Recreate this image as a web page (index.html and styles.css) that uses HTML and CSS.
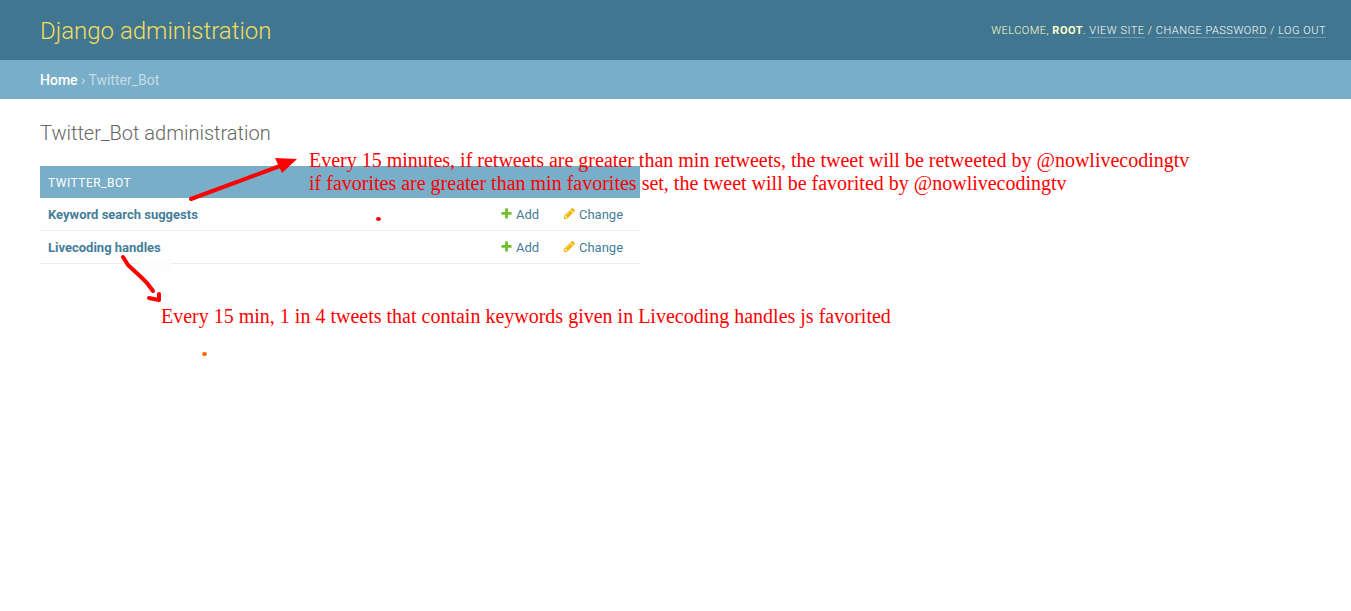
FILE: index.html
```html
<!DOCTYPE html>
<html lang="en">
<head>
<meta charset="utf-8">
<title>Twitter_Bot administration</title>
<link rel="stylesheet" href="styles.css">
</head>
<body>
<svg class="symbols" aria-hidden="true">
  <symbol id="icon-add" viewBox="0 0 1792 1792"><path fill="#70bf2b" d="M1600 796v192q0 40-28 68t-68 28h-416v416q0 40-28 68t-68 28h-192q-40 0-68-28t-28-68v-416h-416q-40 0-68-28t-28-68v-192q0-40 28-68t68-28h416v-416q0-40 28-68t68-28h192q40 0 68 28t28 68v416h416q40 0 68 28t28 68z"/></symbol>
  <symbol id="icon-change" viewBox="0 0 1792 1792"><path fill="#efb80b" d="M491 1536l91-91-235-235-91 91v107h128v128h107zm523-928q0-22-22-22-10 0-17 7l-542 542q-7 7-7 17 0 22 22 22 10 0 17-7l542-542q7-7 7-17zm-54-192l416 416-832 832h-416v-416zm683 96q0 53-37 90l-166 166-416-416 166-165q36-38 90-38 53 0 91 38l235 234q37 39 37 91z"/></symbol>
</svg>
<header class="header">
  <h1 class="site-name"><a href="#">Django administration</a></h1>
  <div class="user-tools">
    Welcome, <strong>root</strong>.
    <a href="#">View site</a> / <a href="#">Change password</a> / <a href="#">Log out</a>
  </div>
</header>
<nav class="breadcrumbs"><a href="#">Home</a> › Twitter_Bot</nav>
<main class="content">
  <h2 class="page-title">Twitter_Bot administration</h2>
  <div class="module">
    <table class="models">
      <caption><a href="#">Twitter_Bot</a></caption>
      <tbody>
        <tr>
          <th scope="row"><a href="#">Keyword search suggests</a></th>
          <td class="add-cell"><a class="action" href="#"><svg class="icon"><use href="#icon-add"/></svg>Add</a></td>
          <td class="change-cell"><a class="action" href="#"><svg class="icon"><use href="#icon-change"/></svg>Change</a></td>
        </tr>
        <tr>
          <th scope="row"><a href="#">Livecoding handles</a></th>
          <td class="add-cell"><a class="action" href="#"><svg class="icon"><use href="#icon-add"/></svg>Add</a></td>
          <td class="change-cell"><a class="action" href="#"><svg class="icon"><use href="#icon-change"/></svg>Change</a></td>
        </tr>
      </tbody>
    </table>
  </div>
</main>
<svg class="marks" width="400" height="370" aria-hidden="true">
  <rect x="139" y="258" width="33" height="13" fill="#fdfdfd"/>
  <path d="M191 199L280 166" stroke="#f00" stroke-width="4" stroke-linecap="round"/>
  <path d="M275 158L297 159L282 173Z" fill="#f00"/>
  <path d="M123 257L128 265L141 277L147 283L153 291M149 298L159 300L159 294" fill="none" stroke="#f00" stroke-width="4" stroke-linecap="round" stroke-linejoin="round"/>
  <ellipse cx="378.500" cy="219" rx="2.500" ry="2" fill="#f00"/>
  <ellipse cx="204.500" cy="354" rx="2.500" ry="2" fill="#f60"/>
</svg>
<p class="note note-search">Every 15 minutes, if retweets are greater than min retweets, the tweet will be retweeted by @nowlivecodingtv<br>if favorites are greater than min favorites set, the tweet will be favorited by @nowlivecodingtv</p>
<p class="note note-handles">Every 15 min, 1 in 4 tweets that contain keywords given in Livecoding handles js favorited</p>
</body>
</html>
```
FILE: styles.css
```css
body {
  position: relative;
  min-height: 100vh;
  margin: 0;
  background: #fff;
  color: #333;
  font: 14px/17px Roboto, "Liberation Sans", sans-serif;
}

a {
  color: #447e9b;
  text-decoration: none;
}

.symbols {
  position: absolute;
  width: 0;
  height: 0;
}

.header {
  display: flex;
  align-items: center;
  justify-content: space-between;
  padding: 16px 25px 14px 40px;
  background: #417690;
  color: #ffc;
}

.site-name {
  margin: 0;
  font-size: 24px;
  font-weight: 300;
  line-height: 30px;
}

.site-name a {
  color: #f5dd5d;
}

.user-tools {
  font-size: 11px;
  font-weight: 300;
  line-height: 14px;
  letter-spacing: 0.5px;
  text-transform: uppercase;
}

.user-tools strong {
  font-weight: 700;
}

.user-tools a {
  border-bottom: 1px solid rgba(255, 255, 255, 0.25);
  color: #fff;
}

.breadcrumbs {
  padding: 12px 40px 10px;
  background: #79aec8;
  color: #c4dce8;
}

.breadcrumbs a {
  color: #fff;
  font-weight: 500;
}

.content {
  padding: 22px 40px;
}

.page-title {
  margin: 0 0 21px;
  color: #666;
  font-size: 20px;
  font-weight: 300;
  line-height: 24px;
}

.module {
  max-width: 600px;
}

.models {
  width: 100%;
  border-collapse: collapse;
  font-size: 13px;
  line-height: 16px;
}

.models caption {
  padding: 9px 8px 7px;
  background: #79aec8;
  font-size: 12px;
  text-align: left;
  letter-spacing: 0.5px;
  text-transform: uppercase;
}

.models caption a {
  color: #fff;
}

.models th,
.models td {
  padding: 9px 8px 7px;
  border-bottom: 1px solid #eee;
  text-align: left;
  vertical-align: top;
}

.models th {
  font-weight: 700;
}

.models .add-cell {
  width: 47px;
}

.models .change-cell {
  width: 69px;
}

.action {
  display: flex;
  gap: 3px;
}

.icon {
  width: 13px;
  height: 13px;
}

.marks {
  position: absolute;
  top: 0;
  left: 0;
}

.note {
  position: absolute;
  margin: 0;
  color: #f00;
  font: 20px/23px "Liberation Serif", serif;
  white-space: nowrap;
}

.note-search {
  top: 149px;
  left: 309px;
}

.note-handles {
  top: 305px;
  left: 161px;
}
```
